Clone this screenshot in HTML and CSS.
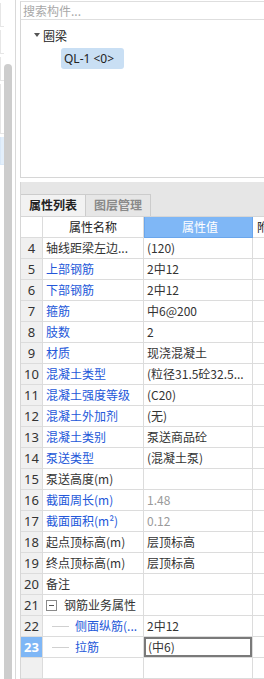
FILE: index.html
```html
<!DOCTYPE html>
<html>
<head>
<meta charset="utf-8">
<link rel="stylesheet" href="styles.css">
</head>
<body>
<div class="app">
  <div class="edge">
    <div class="edge-item"></div>
    <div class="edge-item"></div>
    <div class="edge-item"></div>
    <div class="edge-item tall"></div>
    <div class="edge-item sel"></div>
  </div>
  <div class="scroll"><div class="thumb"></div></div>
  <div class="sep"></div>
  <div class="main">
    <div class="search">搜索构件...</div>
    <div class="tree">
      <div class="tree-node"><span class="caret"></span><span>圈梁</span></div>
      <div class="tree-leaf"><span class="leaf-sel">QL-1 &lt;0&gt;</span></div>
    </div>
    <div class="tabbar">
      <div class="tab active">属性列表</div>
      <div class="tab">图层管理</div>
    </div>
    <div class="grid">
      <div class="c num hd"></div><div class="c name hd center">属性名称</div><div class="c val hdv">属性值</div><div class="c ext hd">附加</div>

      <div class="c num">4</div><div class="c name">轴线距梁左边...</div><div class="c val">(120)</div><div class="c ext"></div>
      <div class="c num">5</div><div class="c name blue">上部钢筋</div><div class="c val">2中12</div><div class="c ext"></div>
      <div class="c num">6</div><div class="c name blue">下部钢筋</div><div class="c val">2中12</div><div class="c ext"></div>
      <div class="c num">7</div><div class="c name blue">箍筋</div><div class="c val">中6@200</div><div class="c ext"></div>
      <div class="c num">8</div><div class="c name blue">肢数</div><div class="c val">2</div><div class="c ext"></div>
      <div class="c num">9</div><div class="c name blue">材质</div><div class="c val">现浇混凝土</div><div class="c ext"></div>
      <div class="c num">10</div><div class="c name blue">混凝土类型</div><div class="c val">(粒径31.5砼32.5...</div><div class="c ext"></div>
      <div class="c num">11</div><div class="c name blue">混凝土强度等级</div><div class="c val">(C20)</div><div class="c ext"></div>
      <div class="c num">12</div><div class="c name blue">混凝土外加剂</div><div class="c val">(无)</div><div class="c ext"></div>
      <div class="c num">13</div><div class="c name blue">混凝土类别</div><div class="c val">泵送商品砼</div><div class="c ext"></div>
      <div class="c num">14</div><div class="c name blue">泵送类型</div><div class="c val">(混凝土泵)</div><div class="c ext"></div>
      <div class="c num">15</div><div class="c name">泵送高度(m)</div><div class="c val"></div><div class="c ext"></div>
      <div class="c num">16</div><div class="c name blue">截面周长(m)</div><div class="c val gray">1.48</div><div class="c ext"></div>
      <div class="c num">17</div><div class="c name blue">截面面积(m²)</div><div class="c val gray">0.12</div><div class="c ext"></div>
      <div class="c num">18</div><div class="c name">起点顶标高(m)</div><div class="c val">层顶标高</div><div class="c ext"></div>
      <div class="c num">19</div><div class="c name">终点顶标高(m)</div><div class="c val">层顶标高</div><div class="c ext"></div>
      <div class="c num">20</div><div class="c name">备注</div><div class="c val"></div><div class="c ext"></div>
      <div class="c num">21</div><div class="c name group"><span class="minus"></span><span>钢筋业务属性</span></div><div class="c val"></div><div class="c ext"></div>
      <div class="c num">22</div><div class="c name child blue"><span class="branch"></span><span>侧面纵筋(...</span></div><div class="c val">2中12</div><div class="c ext"></div>
      <div class="c num cur">23</div><div class="c name child blue"><span class="branch"></span><span>拉筋</span></div><div class="c val editing">(中6)</div><div class="c ext"></div>
      <div class="c num"></div><div class="c name"></div><div class="c val"></div><div class="c ext"></div>
    </div>
  </div>
</div>
</body>
</html>
```

FILE: styles.css
```css
html, body {
  margin: 0;
  padding: 0;
  background: #ffffff;
}
body {
  width: 264px;
  height: 679px;
  overflow: hidden;
  font-family: "Noto Sans CJK SC", "Noto Sans", sans-serif;
  font-size: 12px;
  color: #333333;
}
.app {
  display: flex;
  height: 679px;
}
.edge {
  width: 4px;
  flex: none;
  display: flex;
  flex-direction: column;
  background: #ffffff;
}
.edge-item {
  height: 24px;
  border-bottom: 1px solid #e6e6e6;
  border-left: 1px solid #e6e6e6;
  box-sizing: border-box;
  margin-top: 3px;
}
.edge-item.tall {
  height: 50px;
}
.edge-item.sel {
  height: 28px;
  background: #e3effb;
  border-color: #d8e8f8;
}
.scroll {
  width: 8px;
  flex: none;
  padding-top: 64px;
  box-sizing: border-box;
}
.thumb {
  height: 100%;
  background: #cdcdcd;
  border-radius: 4px 4px 0 0;
}
.sep {
  width: 8px;
  flex: none;
  box-sizing: border-box;
  border-right: 1px solid #d9d9d9;
  margin-right: 4px;
  width: 4px;
  margin-left: 0;
}
.main {
  flex: none;
  width: 262px;
  display: flex;
  flex-direction: column;
}
.search {
  margin-top: 1px;
  height: 20px;
  box-sizing: border-box;
  border-top: 1px solid #dedede;
  border-bottom: 1px solid #dedede;
  border-left: 1px solid #d6d6d6;
  color: #a8a8a8;
  line-height: 17px;
  padding-left: 2px;
}
.tree {
  height: 173px;
  box-sizing: border-box;
  border-left: 1px solid #d6d6d6;
  border-bottom: 1px solid #d6d6d6;
  padding-top: 6px;
}
.tree-node {
  display: flex;
  align-items: center;
  height: 18px;
  padding-left: 13px;
  gap: 3px;
  color: #222222;
}
.caret {
  width: 0;
  height: 0;
  border-left: 3px solid transparent;
  border-right: 3px solid transparent;
  border-top: 4px solid #555555;
}
.tree-leaf {
  margin-top: 4px;
  padding-left: 40px;
}
.leaf-sel {
  display: inline-block;
  height: 21px;
  line-height: 21px;
  padding: 0 5px 0 3px;
  background: #c9dff4;
  border-radius: 3px;
  color: #222222;
  font-family: "Noto Sans", sans-serif;
  font-size: 12px;
  width: 63px;
  box-sizing: border-box;
}
.tabbar {
  margin-top: 4px;
  height: 34px;
  box-sizing: border-box;
  background: #e6e6e6;
  border-left: 1px solid #d6d6d6;
  padding-top: 12px;
  display: flex;
  align-items: flex-end;
}
.tab {
  height: 22px;
  box-sizing: border-box;
  padding: 0 8px;
  line-height: 20px;
  color: #8a8a8a;
  font-weight: bold;
  border-top: 1px solid #cccccc;
  border-right: 1px solid #cccccc;
}
.tab.active {
  background: #f2f2f2;
  color: #222222;
  width: 65px;
}
.grid {
  display: grid;
  grid-template-columns: 22px 101px 109px 30px;
  grid-auto-rows: 21px;
  border-top: 1px solid #d6d6d6;
  border-left: 1px solid #d6d6d6;
}
.c {
  box-sizing: border-box;
  border-right: 1px solid #dcdcdc;
  border-bottom: 1px solid #dcdcdc;
  line-height: 20px;
  white-space: nowrap;
  overflow: hidden;
  padding-left: 3px;
}
.num {
  background: #f0f0f0;
  text-align: center;
  padding-left: 0;
  font-family: "Noto Sans", sans-serif;
  font-size: 13px;
  color: #333333;
}
.num.cur {
  background: #7fb7f6;
  color: #ffffff;
  font-weight: bold;
}
.hd {
  background: #ffffff;
  color: #222222;
}
.center {
  text-align: center;
  padding-left: 0;
}
.hdv {
  background: #7fb7f6;
  color: #ffffff;
  text-align: center;
  padding-left: 0;
  border: 1px solid #6aa6ec;
  border-top: none;
}
.ext.hd {
  padding-left: 4px;
}
.val {
  padding-left: 3px;
}
.blue {
  color: #2357d9;
}
.gray {
  color: #9a9a9a;
}
.group {
  display: flex;
  align-items: center;
  gap: 7px;
  color: #333333;
  padding-left: 3px;
}
.minus {
  flex: none;
  width: 11px;
  height: 11px;
  box-sizing: border-box;
  border: 1px solid #8a8a8a;
  position: relative;
  background: #ffffff;
}
.minus::after {
  content: "";
  position: absolute;
  left: 2px;
  right: 2px;
  top: 4px;
  height: 1px;
  background: #555555;
}
.child {
  display: flex;
  align-items: center;
  padding-left: 9px;
}
.branch {
  flex: none;
  width: 17px;
  height: 1px;
  background: #d0d0d0;
  margin-right: 6px;
}
.editing {
  box-shadow: inset 0 0 0 2px #7a7a7a;
  padding-left: 4px;
}
```
